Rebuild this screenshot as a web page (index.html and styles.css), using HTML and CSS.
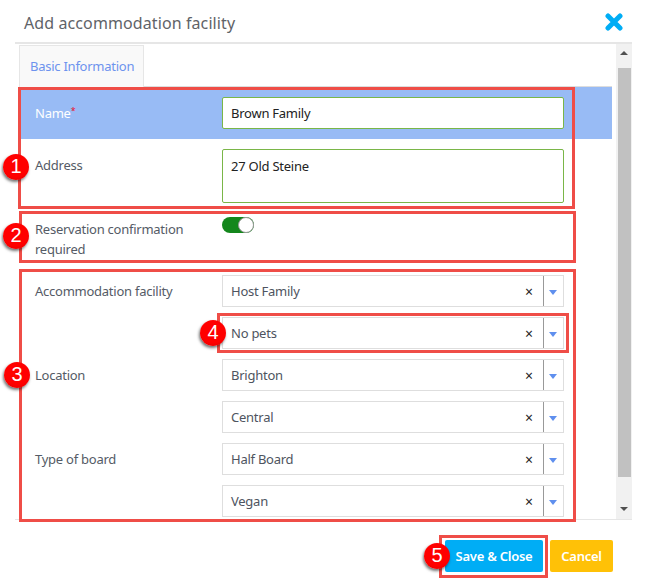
FILE: index.html
```html
<!DOCTYPE html>
<html lang="en">
<head>
<meta charset="UTF-8" />
<title>Add accommodation facility</title>
<link rel="stylesheet" href="styles.css">
</head>
<body>
<div class="modal">
  <div class="modal-head">
    <h2>Add accommodation facility</h2>
    <svg class="close" width="18" height="18" viewBox="0 0 18 18"><path d="M3 3L15 15M15 3L3 15" stroke="#00adf5" stroke-width="5" stroke-linecap="round"/></svg>
  </div>
  <div class="modal-body">
    <div class="content">
      <div class="tabs"><div class="tab">Basic Information</div></div>
      <div class="row row-active">
        <label class="row-label">Name<span class="req">*</span></label>
        <div class="field"><div class="input">Brown Family</div></div>
      </div>
      <div class="row row-address">
        <label class="row-label">Address</label>
        <div class="field"><div class="input textarea">27 Old Steine</div></div>
      </div>
      <div class="row row-toggle">
        <label class="row-label">Reservation confirmation required</label>
        <div class="field"><div class="toggle"><span class="knob"></span></div></div>
      </div>
      <div class="row row-select">
        <label class="row-label">Accommodation facility</label>
        <div class="field stack">
          <div class="select"><span class="val">Host Family</span><span class="clear">×</span><span class="arrow"></span></div>
          <div class="select"><span class="val">No pets</span><span class="clear">×</span><span class="arrow"></span></div>
        </div>
      </div>
      <div class="row row-select">
        <label class="row-label">Location</label>
        <div class="field stack">
          <div class="select"><span class="val">Brighton</span><span class="clear">×</span><span class="arrow"></span></div>
          <div class="select"><span class="val">Central</span><span class="clear">×</span><span class="arrow"></span></div>
        </div>
      </div>
      <div class="row row-select">
        <label class="row-label">Type of board</label>
        <div class="field stack">
          <div class="select"><span class="val">Half Board</span><span class="clear">×</span><span class="arrow"></span></div>
          <div class="select"><span class="val">Vegan</span><span class="clear">×</span><span class="arrow"></span></div>
        </div>
      </div>
    </div>
    <div class="scrollbar">
      <span class="sb-up"></span>
      <span class="sb-thumb"></span>
      <span class="sb-down"></span>
    </div>
  </div>
  <div class="modal-foot">
    <button class="btn btn-save">Save &amp; Close</button>
    <button class="btn btn-cancel">Cancel</button>
  </div>

  <!-- annotations on top of the screenshot -->
  <div class="mark mark-1"></div>
  <div class="mark mark-2"></div>
  <div class="mark mark-3"></div>
  <div class="mark mark-4"></div>
  <div class="mark mark-5"></div>
  <div class="badge badge-1">1</div>
  <div class="badge badge-2">2</div>
  <div class="badge badge-3">3</div>
  <div class="badge badge-4">4</div>
  <div class="badge badge-5">5</div>
</div>
</body>
</html>
```

FILE: styles.css
```css
* { box-sizing: border-box; }

body { margin: 0; background: white; font-family: "Noto Sans", Arial, sans-serif; font-size: 13px; letter-spacing: -0.25px; color: #555b66; }

.modal { position: relative; width: 653px; height: 584px; overflow: hidden; }

.modal-head { height: 44px; margin: 0 15px 0 15px; padding: 4px 9px 0; display: flex; align-items: center; justify-content: space-between; border-bottom: 2px solid #e6e6e6; width: 617px; }
.modal-head h2 { margin: 0; font-size: 16px; font-weight: 400; letter-spacing: 0.1px; color: #5f6368; }
.close { margin-top: -2px; }

.modal-body { display: flex; margin-left: 15px; width: 617px; height: 476px; border-bottom: 1px solid #e6e6e6; }
.content { width: 601px; padding: 1px 0 0 4px; overflow: hidden; }
.tabs { height: 42px; border-bottom: 1px solid #ddd; margin-right: 4px; }
.tab { width: 125px; height: 42px; padding-top: 11px; padding-left: 10px; background: #f9f9f9; border: 1px solid #e6e6e6; border-bottom: none; color: #6d93ee; }

.row { display: flex; }
.row-label { width: 203px; padding-left: 16px; flex-shrink: 0; line-height: 20px; }
.field { width: 342px; }

.row-active { height: 52px; padding-top: 10px; background: #98bbf5; margin-right: 4px; }
.row-active .row-label { color: white; line-height: 32px; }
.req { color: #e8112d; font-size: 9px; vertical-align: top; line-height: 28px; }

.row-address { height: 64px; padding-top: 10px; }
.row-address .row-label { padding-top: 6px; }

.row-toggle { height: 72px; padding-top: 14px; }
.row-toggle .row-label { padding-top: 2px; width: 203px; padding-right: 30px; }

.input { height: 32px; padding: 0 8px; line-height: 30px; background: white; border: 1px solid #7ab648; border-radius: 2px; color: #222; }
.textarea { height: 54px; line-height: 32px; }

.toggle { width: 32px; height: 16px; background: #14871c; border-radius: 8px; position: relative; }
.knob { position: absolute; right: 0; top: 0; width: 16px; height: 16px; background: white; border: 1px solid #999; border-radius: 50%; }

.row-select { margin-bottom: 10px; }
.row-select .row-label { line-height: 32px; }
.stack { display: flex; flex-direction: column; gap: 10px; }

.select { height: 32px; display: flex; align-items: center; background: white; border: 1px solid #dedede; }
.val { flex: 1; padding-left: 8px; color: #4e5460; }
.clear { width: 20px; margin-right: 4px; text-align: center; color: #222; font-size: 14px; }
.arrow { width: 20px; height: 30px; border-left: 1px solid #999; position: relative; }
.arrow::after { content: ""; position: absolute; left: 5px; top: 14px; border-left: 4px solid transparent; border-right: 4px solid transparent; border-top: 5px solid #5f8fee; }

.scrollbar { width: 16px; background: #f1f1f1; display: flex; flex-direction: column; align-items: center; }
.sb-up, .sb-down { height: 24px; width: 16px; position: relative; flex-shrink: 0; }
.sb-up::after { content: ""; position: absolute; left: 4px; top: 7px; border-left: 4px solid transparent; border-right: 4px solid transparent; border-bottom: 4px solid #505050; }
.sb-down::after { content: ""; position: absolute; left: 4px; top: 12px; border-left: 4px solid transparent; border-right: 4px solid transparent; border-top: 4px solid #505050; }
.sb-thumb { height: 409px; flex-shrink: 0; width: 13px; background: #c1c1c1; }
.sb-down { margin-top: auto; }

.modal-foot { display: flex; justify-content: flex-end; gap: 7px; padding: 20px 40px 0 0; }
.btn { height: 32px; border: none; border-radius: 2px; color: white; font-family: inherit; font-size: 13px; letter-spacing: -0.25px; font-weight: 600; padding: 0; }
.btn-save { width: 98px; background: #00adf5; }
.btn-cancel { width: 63px; background: #ffc107; }

.mark { position: absolute; border: 3px solid #ef4d47; }
.mark-1 { left: 18px; top: 87px; width: 557px; height: 122px; }
.mark-2 { left: 19px; top: 211px; width: 557px; height: 52px; }
.mark-3 { left: 19px; top: 269px; width: 557px; height: 253px; }
.mark-4 { left: 217px; top: 313px; width: 352px; height: 40px; }
.mark-5 { left: 439px; top: 535px; width: 109px; height: 43px; }

.badge { position: absolute; width: 26px; height: 26px; border-radius: 50%; background: radial-gradient(circle at 50% 40%, #ff0000 60%, #d80000); box-shadow: -1px 2px 3px rgba(0,0,0,0.55); color: white; font-family: "Liberation Sans", Arial, sans-serif; font-size: 20px; letter-spacing: 0; line-height: 25px; text-align: center; }
.badge-1 { left: 3px; top: 154px; }
.badge-2 { left: 3px; top: 223px; }
.badge-3 { left: 4px; top: 362px; }
.badge-4 { left: 200px; top: 320px; }
.badge-5 { left: 424px; top: 543px; }
```
